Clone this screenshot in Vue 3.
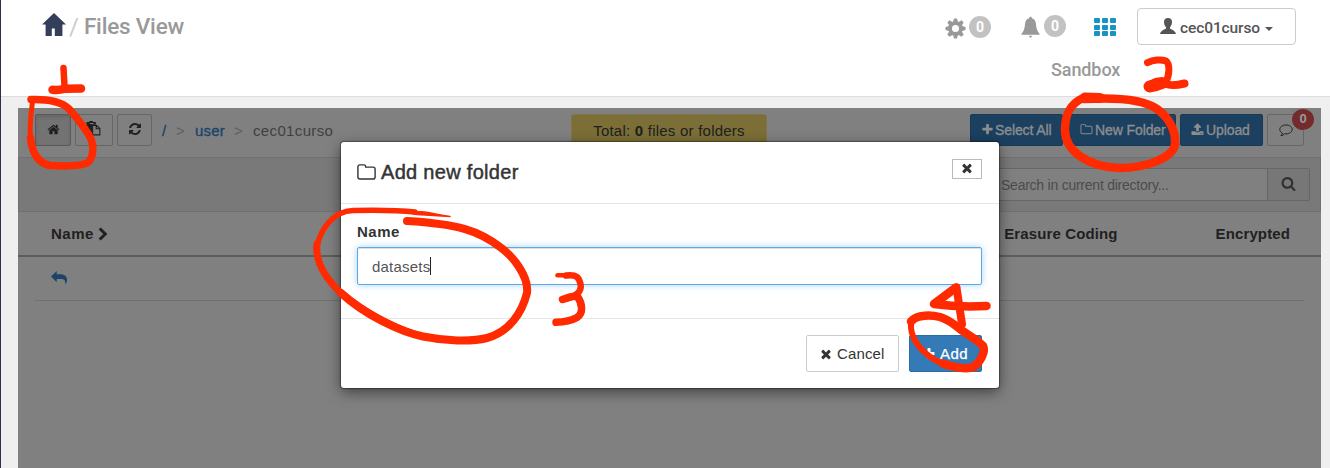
<script setup>
const icons = {
  home: 'M1472 992v480q0 26-19 45t-45 19h-384v-384h-256v384h-384q-26 0-45-19t-19-45v-480q0-1 .5-3t.5-3l575-474 575 474q1 2 1 6zm223-69l-62 74q-8 9-21 11h-3q-13 0-21-7l-692-577-692 577q-12 8-24 7-13-2-21-11l-62-74q-8-10-7-23.5t11-21.5l719-599q32-26 76-26t76 26l244 204v-195q0-14 9-23t23-9h192q14 0 23 9t9 23v408l219 182q10 8 11 21.5t-7 23.5z',
  times: 'M1490 1322q0 40-28 68l-136 136q-28 28-68 28t-68-28l-294-294-294 294q-28 28-68 28t-68-28l-136-136q-28-28-28-68t28-68l294-294-294-294q-28-28-28-68t28-68l136-136q28-28 68-28t68 28l294 294 294-294q28-28 68-28t68 28l136 136q28 28 28 68t-28 68l-294 294 294 294q28 28 28 68z',
  plus: 'M1600 736v192q0 40-28 68t-68 28h-416v416q0 40-28 68t-68 28h-192q-40 0-68-28t-28-68v-416h-416q-40 0-68-28t-28-68v-192q0-40 28-68t68-28h416v-416q0-40 28-68t68-28h192q40 0 68 28t28 68v416h416q40 0 68 28t28 68z',
  upload: 'M1344 1472q0-26-19-45t-45-19-45 19-19 45 19 45 45 19 45-19 19-45zm256 0q0-26-19-45t-45-19-45 19-19 45 19 45 45 19 45-19 19-45zm128-224v320q0 40-28 68t-68 28h-1472q-40 0-68-28t-28-68v-320q0-40 28-68t68-28h427q21 56 70.5 92t110.5 36h256q61 0 110.5-36t70.5-92h427q40 0 68 28t28 68zm-325-648q-17 40-59 40h-256v448q0 26-19 45t-45 19h-256q-26 0-45-19t-19-45v-448h-256q-42 0-59-40-17-39 14-69l448-448q18-19 45-19t45 19l448 448q31 30 14 69z',
  refresh: 'M1639 1056q0 5-1 7-64 268-268 434.5t-478 166.5q-146 0-282.5-55t-243.5-157l-129 129q-19 19-45 19t-45-19-19-45v-448q0-26 19-45t45-19h448q26 0 45 19t19 45-19 45l-137 137q71 66 161 102t187 36q134 0 250-65t186-179q11-17 53-117 8-23 30-23h192q13 0 22.5 9.5t9.5 22.5zm25-800v448q0 26-19 45t-45 19h-448q-26 0-45-19t-19-45 19-45l138-138q-148-137-349-137-134 0-250 65t-186 179q-11 17-53 117-8 23-30 23h-199q-13 0-22.5-9.5t-9.5-22.5v-7q65-268 270-434.5t480-166.5q146 0 284 55.5t245 156.5l130-129q19-19 45-19t45 19 19 45z',
  folder: 'M1600 1312v-704q0-40-28-68t-68-28h-704q-40 0-68-28t-28-68v-64q0-40-28-68t-68-28h-320q-40 0-68 28t-28 68v960q0 40 28 68t68 28h1216q40 0 68-28t28-68zm128-704v704q0 92-66 158t-158 66h-1216q-92 0-158-66t-66-158v-960q0-92 66-158t158-66h320q92 0 158 66t66 158v32h672q92 0 158 66t66 158z',
  search: 'M1216 832q0-185-131.5-316.5t-316.5-131.5-316.5 131.5-131.5 316.5 131.5 316.5 316.5 131.5 316.5-131.5 131.5-316.5zm512 832q0 52-38 90t-90 38q-54 0-90-38l-343-342q-179 124-399 124-143 0-273.5-55.5t-225-150-150-225-55.5-273.5 55.5-273.5 150-225 225-150 273.5-55.5 273.5 55.5 225 150 150 225 55.5 273.5q0 220-124 399l343 343q37 37 37 90z',
}
const gearTeeth = [0, 45, 90, 135, 180, 225, 270, 315]
const gridCells = [0, 1, 2, 3, 4, 5, 6, 7, 8]
</script>

<template>
  <div class="page">
    <header class="top">
      <div class="title">
        <svg class="bighome" viewBox="0 0 24 23"><path d="M12 0 24 11.500h-3.600V23h-7.600v-7.500H9.800V23H3.600V11.500H0z" /></svg>
        <span class="slash">/</span><span class="view">Files View</span>
      </div>
      <div class="account">
        <div class="tools">
          <svg class="gear" viewBox="-11 -11 22 22">
            <circle r="5.7" fill="none" stroke="#999" stroke-width="4" />
            <path v-for="a in gearTeeth" :key="a" :transform="`rotate(${a})`" d="M-2.6-6.5-1.6-10.5h3.2l1 4z" fill="#999" />
          </svg>
          <span class="count">0</span>
          <svg class="bell" viewBox="0 0 20 23"><path d="M10 0q1.300 0 1.400 1.800Q15.500 3 15.800 8q.3 6.500 3.700 10v1.200H.5V18q3.400-3.500 3.700-10Q4.500 3 8.600 1.800 8.700 0 10 0zM8 20.300h4L10 22.500z" fill="#999" /></svg>
          <span class="count high">0</span>
          <div class="apps"><i v-for="c in gridCells" :key="c"></i></div>
          <div class="user">
            <svg viewBox="0 0 16 16"><path d="M8 0c2.600 0 4 1.500 4 4 0 2.400-.9 4-2 5.200v1.300c0 .5 5.600 1.800 6 5.500H0c.4-3.700 6-5 6-5.500V9.200C4.900 8 4 6.400 4 4c0-2.500 1.400-4 4-4z" /></svg>
            <span>cec01curso</span><b></b>
          </div>
        </div>
        <div class="sandbox">Sandbox</div>
      </div>
    </header>

    <main class="panel">
      <div class="bar">
        <div class="sq active"><svg class="fa" viewBox="0 0 1792 1792"><path :d="icons.home" /></svg></div>
        <div class="sq paste">
          <svg viewBox="0 0 16 16"><path d="M1 1h3V0h4v1h3v3H7v8H1zM4.500 2v1.200h4V2z" fill-rule="evenodd" /><path d="M7.600 4.600h4L15.300 8v6.800H7.600zM11.400 4.600V8.200h3.900" fill="none" stroke="#202020" stroke-width="1.200" /></svg>
        </div>
        <div class="sq refresh"><svg class="fa" viewBox="0 0 1792 1792"><path :d="icons.refresh" /></svg></div>
        <nav class="crumbs">
          <a>/</a><i>&gt;</i><a class="usr">user</a><i class="second">&gt;</i><span>cec01curso</span>
        </nav>
        <div class="total">Total: <b>0</b> files or folders</div>
        <div class="actions">
          <div class="btn select"><svg class="fa" viewBox="0 0 1792 1792"><path :d="icons.plus" /></svg><span>Select All</span></div>
          <div class="btn new"><svg class="fa" viewBox="0 0 1792 1792"><path :d="icons.folder" /></svg><span>New Folder</span></div>
          <div class="btn up"><svg class="fa" viewBox="0 0 1792 1792"><path :d="icons.upload" /></svg><span>Upload</span></div>
          <div class="sq chat">
            <svg viewBox="0 0 14 13"><path d="M7 1C3.500 1 .8 2.900.8 5.400c0 1.600 1 2.900 2.600 3.700-.2 1-.7 1.800-1.500 2.600 1.700-.2 2.900-.9 3.700-1.900L7 9.900c3.500 0 6.200-2 6.200-4.500S10.500 1 7 1z" /></svg>
            <em>0</em>
          </div>
        </div>
      </div>
      <div class="filter">
        <div class="search"><span>Search in current directory...</span></div>
        <div class="go"><svg viewBox="0 0 1792 1792"><path :d="icons.search" /></svg></div>
      </div>
      <div class="head">
        <div class="name">Name <svg viewBox="0 0 10 14"><path d="M1.700 1.500 7.300 7l-5.600 5.500" /></svg></div>
        <div class="cols"><span>Erasure Coding</span><span>Encrypted</span></div>
      </div>
      <div class="row">
        <svg viewBox="0 0 16 14"><path d="M0 5.500 5.700 0v3.200h3.500C14 3.200 16 5.600 16 9c0 1.800-.7 3.300-1.700 4.600C14.700 9.800 13.500 8 9.500 8H5.700v3.200z" /></svg>
      </div>
    </main>

    <section class="modal">
      <div class="mhead">
        <svg viewBox="0 0 19 16"><path d="M3 .9h3.900q1.600 0 1.800 1.600v.6H16q2.100 0 2.100 2.100v7.700q0 2.100-2.100 2.100H3Q.9 15 .9 12.900V3Q.9.900 3 .9z" /></svg>
        <h4>Add new folder</h4>
        <div class="close"><svg class="fa" viewBox="0 0 1792 1792"><path :d="icons.times" /></svg></div>
      </div>
      <div class="mbody">
        <label>Name</label>
        <div class="field"><span>datasets</span><i></i></div>
      </div>
      <div class="mfoot">
        <div class="mbtn cancel"><svg class="fa" viewBox="0 0 1792 1792"><path :d="icons.times" /></svg><span>Cancel</span></div>
        <div class="mbtn add"><svg class="fa" viewBox="0 0 1792 1792"><path :d="icons.plus" /></svg><span>Add</span></div>
      </div>
    </section>

    <svg class="ink" viewBox="0 0 1330 468">
      <!-- step 1 -->
      <path d="M63.500 68 64.500 86" stroke-width="6.500" />
      <path d="M52.500 89.800Q59 90.500 65 88.700L81 88.500" stroke-width="8.500" />
      <path d="M32.500 102C30 120 29.500 132 31 141" stroke-width="5" />
      <path d="M31 99.500C48 99 60 101 68 108C74 114 85 128 90 137C95 147 93 159 87 163C79 167 60 166 50 165.500C37 163 32 152 30.500 138" stroke-width="7.500" />
      <!-- step 2 -->
      <path d="M1147.500 62.700C1153 60 1161 59 1166 61C1170 64 1170 75 1165 84" stroke-width="7" />
      <path d="M1149 86Q1157 79 1165 83Q1170 87 1184.500 83.500" stroke-width="8" />
      <path d="M1149.500 86.500Q1155 86 1162 83" stroke-width="12" />
      <path d="M1083 98C1070 104 1065 114 1065 130C1065 151 1088 167 1120 168C1146 168 1172 158 1175 145C1176 133 1171 119 1157 109C1146 101 1121 97 1084 99" stroke-width="8.500" />
      <path d="M1085 97.500 1100 98" stroke-width="10" />
      <!-- step 3 -->
      <path d="M450 216.500C434 214 426 211.500 417 211.500L405 209.500 405 212 417 214.500z" fill="#ff2a00" stroke-width="1.500" />
      <path d="M415 212C396 210 375 210 353 210.500C333 211 321 229 317 246" stroke-width="5.500" />
      <path d="M317 244C315 261 324 277 341 293C363 311 390 326 417 335" stroke-width="7" />
      <path d="M341 293C365 315 400 332 423 336.500C445 341 471 342 487 338C509 332 522 313 527 293C529 277 514 257 500 247C479 231 459 224 407 221" stroke-width="8" />
      <path d="M557.500 275.200H568" stroke-width="4.500" />
      <path d="M566 275.500C577 274 579 278 580.500 284C582 291 577 297 562.500 299.500" stroke-width="6.500" />
      <path d="M562.500 299.500Q573 295.500 577.500 296.500C582 303 584 313 577 317.500Q569 322 556 322.300" stroke-width="7.500" />
      <!-- step 4 -->
      <path d="M956 287.500 934 304Q958 307.500 986.500 306" stroke-width="8.500" />
      <path d="M956.500 287.500 962 324" stroke-width="8" />
      <path d="M911 323C910 337 918 348 931 357.500C938 362 949 367 953 367" stroke-width="6" />
      <path d="M911 321.500C917 314 932 315 940 317C950 320 956 326 962 330.500C970 336 979 341 983 346C986 352 980 362 974 366.500C968 370 953 367.500 943 363.500" stroke-width="8.500" />
    </svg>
  </div>
</template>

<style>
html, body { margin: 0; overflow: hidden; background: #efefef; }
</style>

<style scoped>
* { box-sizing: border-box; }
.page { position: relative; width: 1330px; height: 468px; overflow: hidden; border-left: 1px solid #2c3148; background: #efefef; font-family: "Liberation Sans", Arial, sans-serif; font-size: 15px; color: #202020; display: flex; flex-direction: column; }
svg { display: block; flex: none; }
.fa { width: 14px; height: 14px; fill: currentColor; }
.top { height: 97px; flex: none; background: #fff; border-bottom: 1px solid #ddd; display: flex; justify-content: space-between; font-family: Roboto, sans-serif; }
.title { display: flex; align-items: flex-start; padding: 13px 0 0 41px; color: #999; font-size: 24px; line-height: 28px; }
.bighome { width: 24px; height: 23px; fill: #323e5a; }
.slash { color: #ccc; margin-left: 3px; }
.view { font-weight: 500; font-size: 22.500px; margin-left: 5px; letter-spacing: -.2px; line-height: 27px; }
.account { width: 385px; }
.tools { display: flex; height: 54px; padding-top: 8px; align-items: flex-start; }
.gear { width: 21px; height: 21px; margin-top: 10px; }
.count { width: 22px; height: 22px; border-radius: 50%; background: #c2c2c2; color: #fff; font-weight: 700; font-size: 14px; line-height: 22px; text-align: center; margin: 8px 0 0 3px; }
.count.high { margin: 7px 0 0 4px; }
.bell { width: 19px; height: 23px; margin: 8px 0 0 30px; }
.apps { display: grid; grid-template-columns: repeat(3, 6px); grid-auto-rows: 5px; gap: 1.500px 2px; margin: 10px 0 0 28px; width: 22px; }
.apps i { background: #1794c4; border-radius: 1px; }
.user { width: 159px; height: 37px; margin-left: 21px; border: 1px solid #ccc; border-radius: 4px; display: flex; align-items: center; padding-left: 22px; color: #555; font-size: 15.500px; font-weight: 500; letter-spacing: -.1px; }
.user svg { width: 16px; height: 16px; fill: #555; margin-top: -2px; }
.user span { margin: 2px 5px 0 4px; }
.user b { border: 4px solid transparent; border-top-color: #555; border-bottom: 0; margin-top: 4px; }
.sandbox { color: #999; font-weight: 500; font-size: 18px; line-height: 22px; padding-left: 106px; margin-top: 5px; letter-spacing: -.1px; }

.panel { margin: 11px 0 0 17px; width: 1303px; height: 360px; background: #808080; flex: none; }
.bar { height: 49px; display: flex; padding: 6px 17px 0; position: relative; }
.sq { width: 36px; height: 32px; border: 1px solid #666; border-radius: 2px; display: flex; align-items: center; justify-content: center; }
.sq .fa { width: 13px; height: 13px; margin-top: -2px; }
.sq.active { background: #737373; border-color: #5a5a5a; box-shadow: inset 0 2px 3px #666; }
.paste { width: 38px; margin-left: 4px; }
.paste svg { width: 16px; height: 15px; margin: -3px 0 0 -2px; fill: #202020; }
.refresh { width: 35px; margin-left: 4px; }
.refresh .fa { width: 14px; height: 14px; }
.crumbs { display: flex; line-height: 34px; margin-left: 10px; color: #404040; width: 180px; }
.crumbs a { color: #1a436a; width: 14px; -webkit-text-stroke: .3px; }
.crumbs i { font-style: normal; color: #5f5f5f; width: 19px; }
.crumbs .usr { width: 39px; letter-spacing: .2px; }
.crumbs span { letter-spacing: .35px; }
.total { width: 196px; height: 34px; margin-left: 229px; background: #7b6e36; border: 1px solid #827446; border-radius: 3px; text-align: center; line-height: 32px; color: #202020; flex: none; letter-spacing: .23px; }
.actions { display: flex; margin-left: auto; }
.btn { height: 32px; background: #1b4060; border: 1px solid #17395a; border-radius: 2px; color: #8d8d8d; display: flex; align-items: center; font-size: 14px; padding-left: 10px; white-space: nowrap; -webkit-text-stroke: .35px; letter-spacing: -.1px; }
.btn .fa { width: 13px; height: 13px; margin: -2px 2px 0 0; }
.btn span { margin-top: -1px; }
.select { width: 93px; }
.select span { margin-left: -1px; }
.new { width: 109px; margin-left: 4px; padding-left: 12px; }
.up { width: 83px; margin-left: 4px; }
.chat { width: 37px; margin-left: 4px; position: relative; }
.chat svg { width: 14px; height: 13px; fill: none; stroke: #222; stroke-width: 1; }
.chat em { position: absolute; left: 24px; top: -6px; width: 22px; height: 21px; border-radius: 50%; background: #742b2b; color: #999; font: bold 13px/20px "Liberation Sans", sans-serif; text-align: center; }
.filter { height: 55px; background: #797979; border: 1px solid #707070; display: flex; justify-content: flex-end; padding: 10px 10px 0 0; }
.search { width: 310px; height: 33px; background: #808080; border: 1px solid #666; line-height: 32px; padding-left: 42px; color: #4c4c4c; font-size: 14px; letter-spacing: -.24px; }
.go { width: 42px; height: 33px; border: 1px solid #666; border-left: 0; background: #777; display: flex; align-items: center; justify-content: center; border-radius: 0 2px 2px 0; }
.go svg { width: 15px; height: 15px; fill: #303030; margin-top: -2px; }
.head { height: 45px; border-bottom: 2px solid #5d5d5d; display: flex; justify-content: space-between; font-weight: bold; line-height: 43px; padding: 0 31px 0 33px; font-size: 15px; letter-spacing: .12px; }
.name { display: flex; align-items: center; letter-spacing: .5px; }
.name svg { width: 10px; height: 14px; margin-left: 4px; fill: none; stroke: #202020; stroke-width: 3; }
.cols { display: flex; gap: 98px; }
.row { height: 44px; margin: 0 17px; padding: 12px 0 0 16px; border-bottom: 1px solid #707070; }
.row svg { width: 16px; height: 14px; fill: #1b4568; margin-top: 2px; }

.modal { position: absolute; left: 340px; top: 142px; width: 658px; height: 246px; background: #fff; border-radius: 3px; box-shadow: 0 4px 14px rgba(0,0,0,.5), 0 0 1px 1px rgba(0,0,0,.35); color: #333; }
.mhead { height: 62px; border-bottom: 1px solid #e5e5e5; display: flex; padding: 0 17px 0 16px; align-items: center; }
.mhead > svg { width: 19px; height: 16px; fill: none; stroke: #333; stroke-width: 1.400; margin-top: -1px; }
.mhead h4 { margin: 0 0 0 5px; font-size: 20px; font-weight: normal; -webkit-text-stroke: .45px; letter-spacing: .3px; }
.close { width: 30px; height: 20px; border: 1px solid #bbb; margin: -7px 0 0 auto; display: flex; align-items: center; justify-content: center; }
.close svg { margin-top: -2px; }
.mbody { height: 115px; border-bottom: 1px solid #e5e5e5; padding: 18px 17px 0 16px; }
.mbody label { display: block; font-weight: bold; font-size: 15px; line-height: 19px; letter-spacing: .5px; }
.field { margin-top: 6px; height: 38px; border: 1px solid #5ba9e6; border-radius: 2px; box-shadow: inset 0 1px 1px #ddd, 0 0 7px rgba(102,175,233,.55); padding-left: 14px; display: flex; align-items: center; color: #555; font-size: 15px; letter-spacing: .22px; }
.field i { width: 1px; height: 18px; background: #222; }
.mfoot { display: flex; justify-content: flex-end; gap: 10px; padding: 16px 17px 0 0; }
.mbtn { height: 37px; display: flex; align-items: center; font-size: 15px; border-radius: 2px; border: 1px solid #ccc; padding-left: 12px; }
.mbtn .fa { margin: 0 4px 0 0; }
.mbtn span { letter-spacing: .15px; }
.cancel { width: 93px; }
.add { width: 73px; background: #337ab7; border-color: #2e6da4; color: #fff; -webkit-text-stroke: .25px; }
.add span { letter-spacing: .4px; }
.ink { position: absolute; left: -1px; top: 0; width: 1330px; height: 468px; fill: none; stroke: #ff2a00; stroke-linecap: round; stroke-linejoin: round; }
</style>
